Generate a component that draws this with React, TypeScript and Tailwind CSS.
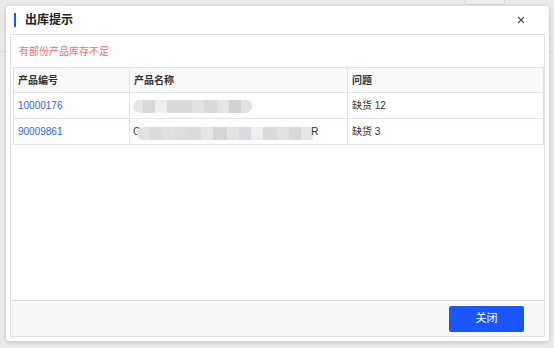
import { X } from 'lucide-react';

const rows = [
  { code: '10000176', issue: '缺货 12' },
  { code: '90009861', issue: '缺货 3' },
];

function BlurName1() {
  return (
    <div className="flex h-[13px] w-[119px] overflow-hidden rounded-full">
      <div className="w-[10px] bg-[#e6e6e6]" />
      <div className="w-[12px] bg-[#d9d9d9]" />
      <div className="w-[12px] bg-[#eeeeee]" />
      <div className="w-[25px] bg-[#dadada]" />
      <div className="w-[12px] bg-[#e2e2e2]" />
      <div className="w-[13px] bg-[#d6d9dd]" />
      <div className="w-[12px] bg-[#e4e4e4]" />
      <div className="w-[12px] bg-[#d1d1d1]" />
      <div className="w-[11px] bg-[#dfe1e4]" />
    </div>
  );
}

function BlurName2() {
  return (
    <div className="flex h-[25px] items-center">
      <span>C</span>
      <div className="ml-[-3px] mt-[3px] flex h-[13px] w-[176px] overflow-hidden rounded-l-[6px] rounded-r-[2px]">
        <div className="w-[12px] bg-[#e3e3e3]" />
        <div className="w-[14px] bg-[#dcdcdc]" />
        <div className="w-[12px] bg-[#e1e1e1]" />
        <div className="w-[14px] bg-[#dedcdc]" />
        <div className="w-[12px] bg-[#d9dbde]" />
        <div className="w-[12px] bg-[#e5e5e5]" />
        <div className="w-[14px] bg-[#d6d6d6]" />
        <div className="w-[12px] bg-[#e3e3e3]" />
        <div className="w-[12px] bg-[#d8dbdf]" />
        <div className="w-[12px] bg-[#eeeeee]" />
        <div className="w-[14px] bg-[#dadada]" />
        <div className="w-[12px] bg-[#e2e2e2]" />
        <div className="w-[12px] bg-[#d9d9d9]" />
        <div className="w-[12px] bg-[#e6e6e6]" />
      </div>
      <span className="ml-[-2px]">R</span>
    </div>
  );
}

export default function App() {
  return (
    <div
      className="relative h-[348px] w-[554px] overflow-hidden bg-[#e9e9e9] text-[#333]"
      style={{ fontFamily: '"Liberation Sans", "Noto Sans CJK SC", sans-serif' }}
    >
      {/* page behind the overlay */}
      <div className="h-[52px] border-b border-[#dcdcdc]" />
      <div className="absolute right-[49px] top-[-2px] h-[7px] w-[40px] rounded-[2px] border border-[#d6d6d6] bg-[#eeeeee]" />

      {/* dialog */}
      <div className="absolute left-[6px] top-[6px] flex h-[335px] w-[543px] flex-col rounded-[3px] bg-white shadow-[0_1px_4px_rgba(0,0,0,0.18)]">
        {/* title */}
        <div className="flex h-[28px] shrink-0 items-center pl-[8px] pr-[23px]">
          <div className="h-[14px] w-[2px] bg-[#1a56ff]" />
          <span className="ml-[9px] text-[12px] font-bold text-[#222]">出库提示</span>
          <X size={10} strokeWidth={3} className="ml-auto text-[#555]" />
        </div>

        {/* body */}
        <div className="mx-[4px] mb-[4px] flex flex-1 flex-col border border-[#dcdfe6]">
          <div className="flex-1 px-[2px]">
            <div className="flex h-[32px] items-center pl-[6px] text-[10px] text-[#ff6a6a]">有部份产品库存不足</div>
            <table className="w-[530px] table-fixed border-collapse text-[10px]">
              <colgroup>
                <col className="w-[116px]" />
                <col className="w-[218px]" />
                <col className="w-[196px]" />
              </colgroup>
              <thead>
                <tr className="h-[25px] bg-[#f8f9fb]">
                  <th className="border border-[#dfe2e8] pl-[4px] text-left font-bold text-[#333]">产品编号</th>
                  <th className="border border-[#dfe2e8] pl-[4px] text-left font-bold text-[#333]">产品名称</th>
                  <th className="border border-[#dfe2e8] pl-[4px] text-left font-bold text-[#333]">问题</th>
                </tr>
              </thead>
              <tbody>
                {rows.map((r, i) => (
                  <tr key={r.code} className="h-[25px]">
                    <td className="border border-[#dfe2e8] pl-[4px] text-[#2d64f0]">{r.code}</td>
                    <td className="border border-[#dfe2e8] pl-[3px] align-top">
                      {i === 0 ? (
                        <div className="flex h-[25px] items-center pt-[1px]">
                          <BlurName1 />
                        </div>
                      ) : (
                        <BlurName2 />
                      )}
                    </td>
                    <td className="border border-[#dfe2e8] pl-[4px]">{r.issue}</td>
                  </tr>
                ))}
              </tbody>
            </table>
          </div>

          {/* footer */}
          <div className="flex h-[36px] shrink-0 items-center justify-end border-t border-[#dcdcdc] bg-[#f8f8f8] pr-[20px]">
            <button className="h-[26px] w-[75px] rounded-[2px] bg-[#1a56ff] text-[11px] text-white">关闭</button>
          </div>
        </div>
      </div>
    </div>
  );
}
